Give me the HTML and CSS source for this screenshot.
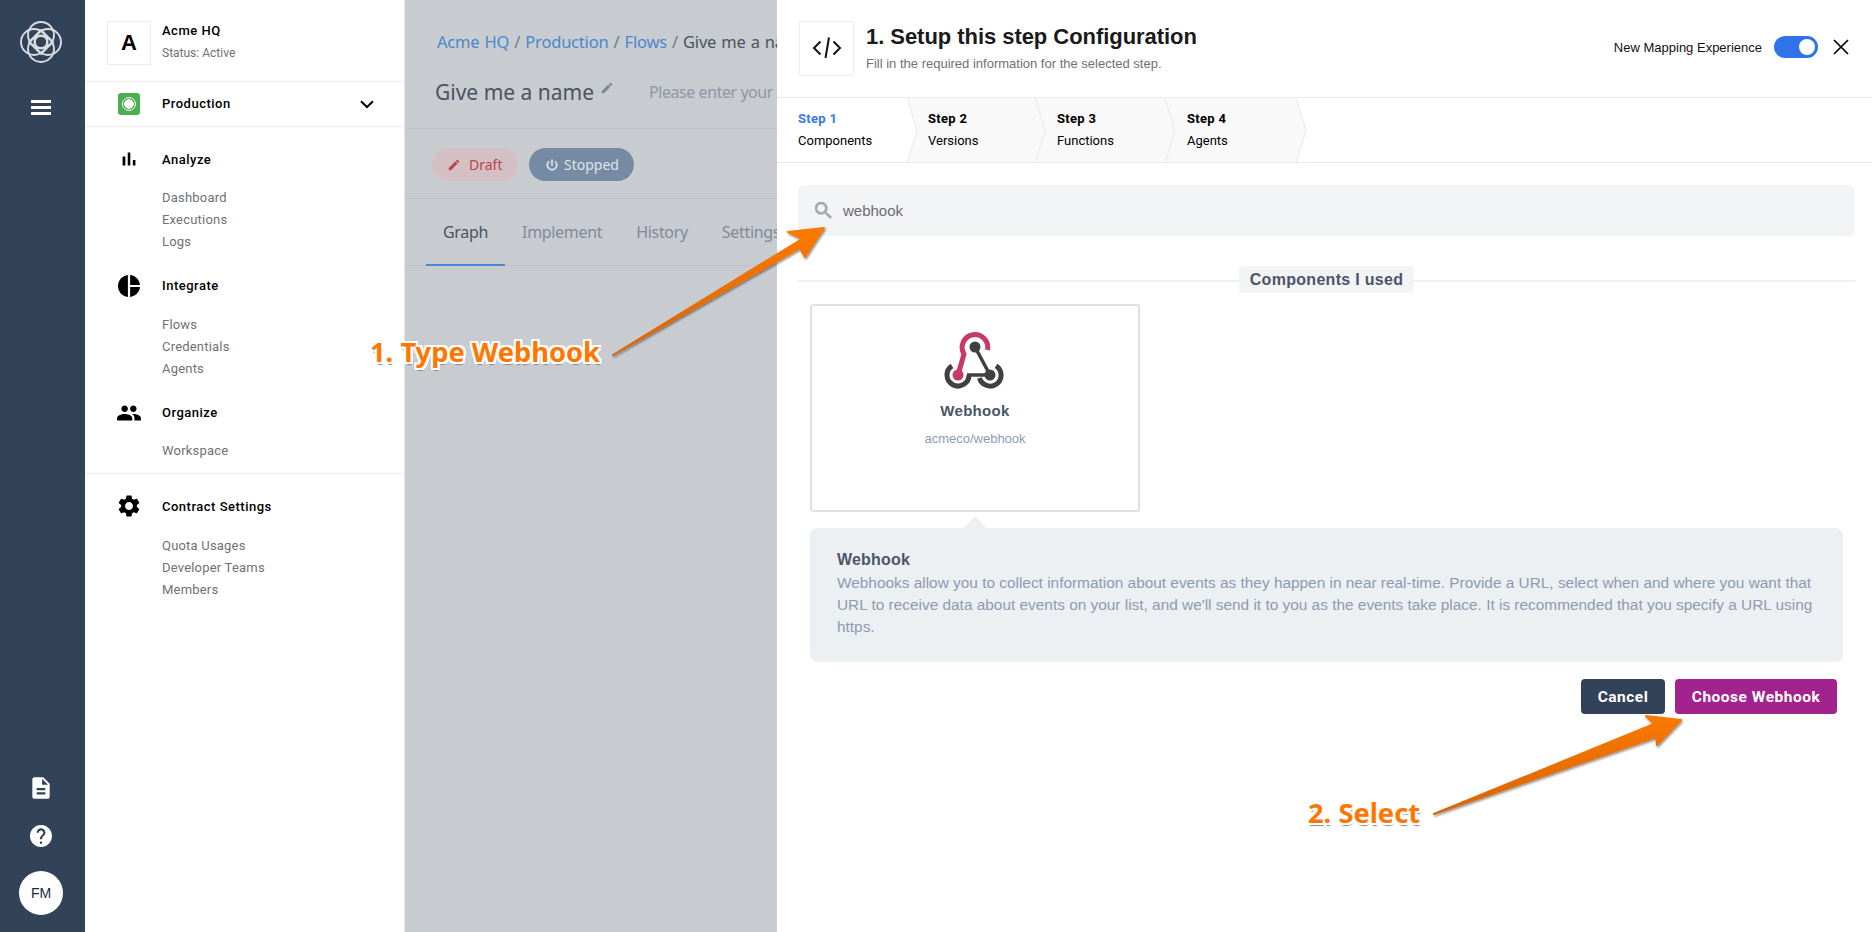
FILE: index.html
```html
<!DOCTYPE html>
<html lang="en">
<head>
<meta charset="utf-8">
<title>Setup this step Configuration</title>
<link rel="stylesheet" href="styles.css">
</head>
<body>
<div class="app">
  <aside class="rail">
    <svg class="rail-logo" viewBox="0 0 44 44" fill="none" stroke="#d9dde1" stroke-width="1.900">
      <circle cx="22" cy="15" r="13"/><circle cx="22" cy="29" r="13"/><circle cx="15" cy="22" r="13"/><circle cx="29" cy="22" r="13"/>
      <circle cx="22" cy="22" r="6.500" stroke-width="2.200"/>
      <path d="M22 10 34 22 22 34 10 22Z"/>
    </svg>
    <div class="burger"><span></span><span></span><span></span></div>
    <div class="rail-space"></div>
    <svg class="rail-icon" viewBox="0 0 24 24"><path d="M14 2H6c-1.100 0-1.990.9-1.990 2L4 20c0 1.100.89 2 1.990 2H18c1.100 0 2-.9 2-2V8l-6-6zm2 16H8v-2h8v2zm0-4H8v-2h8v2zm-3-5V3.500L18.500 9H13z"/></svg>
    <svg class="rail-icon help" viewBox="2 2 20 20"><path d="M12 2C6.480 2 2 6.480 2 12s4.480 10 10 10 10-4.480 10-10S17.520 2 12 2zm1 17h-2v-2h2v2zm2.070-7.750l-.9.920C13.450 12.900 13 13.500 13 15h-2v-.5c0-1.100.45-2.100 1.170-2.830l1.240-1.260c.37-.36.59-.86.59-1.410 0-1.100-.9-2-2-2s-2 .9-2 2H8c0-2.210 1.790-4 4-4s4 1.790 4 4c0 .88-.36 1.680-.93 2.250z"/></svg>
    <div class="avatar">FM</div>
  </aside>

  <nav class="sidebar">
    <header class="org">
      <div class="org-logo">A</div>
      <div>
        <div class="org-name">Acme HQ</div>
        <div class="org-status">Status: Active</div>
      </div>
    </header>
    <div class="env">
      <span class="env-icon"><span class="env-dot"></span></span>
      <span class="env-name">Production</span>
      <svg class="env-chev" viewBox="0 0 14 9" fill="none" stroke="#000" stroke-width="2"><path d="M1 1.200 7 7l6-5.800"/></svg>
    </div>
    <section class="group first">
      <div class="group-head">
        <svg class="group-icon" viewBox="0 0 24 24"><path d="M5 9.200h3V19H5V9.200zM10.600 5h2.800v14h-2.800V5zm5.600 8H19v6h-2.800v-6z"/></svg>
        <span>Analyze</span>
      </div>
      <a>Dashboard</a><a>Executions</a><a>Logs</a>
    </section>
    <section class="group roomy">
      <div class="group-head">
        <svg class="group-icon" viewBox="2 2 20 20"><path d="M11 2v20c-5.070-.5-9-4.790-9-10s3.930-9.500 9-10zm2.030 0v8.990H22c-.47-4.740-4.240-8.520-8.970-8.990zm0 11.010V22c4.740-.47 8.500-4.250 8.970-8.990h-8.970z"/></svg>
        <span>Integrate</span>
      </div>
      <a>Flows</a><a>Credentials</a><a>Agents</a>
    </section>
    <section class="group divided">
      <div class="group-head">
        <svg class="group-icon wide" viewBox="0 0 24 24"><path d="M16 11c1.660 0 2.990-1.340 2.990-3S17.660 5 16 5c-1.660 0-3 1.340-3 3s1.340 3 3 3zm-8 0c1.660 0 2.990-1.340 2.990-3S9.660 5 8 5C6.340 5 5 6.340 5 8s1.340 3 3 3zm0 2c-2.330 0-7 1.170-7 3.500V19h14v-2.500c0-2.330-4.670-3.500-7-3.500zm8 0c-.29 0-.62.02-.97.05 1.160.84 1.970 1.970 1.970 3.450V19h6v-2.500c0-2.330-4.670-3.500-7-3.500z"/></svg>
        <span>Organize</span>
      </div>
      <a>Workspace</a>
    </section>
    <section class="group settings">
      <div class="group-head">
        <svg class="group-icon" viewBox="2 2 20 20"><path d="M19.140 12.940c.04-.3.06-.61.06-.94 0-.32-.02-.64-.07-.94l2.030-1.580c.18-.14.23-.41.12-.61l-1.920-3.320c-.12-.22-.37-.29-.59-.22l-2.390.96c-.5-.38-1.030-.7-1.620-.94l-.36-2.540c-.04-.24-.24-.41-.48-.41h-3.840c-.24 0-.43.17-.47.41l-.36 2.540c-.59.24-1.130.57-1.620.94l-2.390-.96c-.22-.08-.47 0-.59.22L2.740 8.870c-.12.21-.08.47.12.61l2.030 1.580c-.05.3-.09.63-.09.94s.02.64.07.94l-2.030 1.580c-.18.14-.23.41-.12.61l1.920 3.320c.12.22.37.29.59.22l2.390-.96c.5.38 1.030.7 1.620.94l.36 2.540c.05.24.24.41.48.41h3.840c.24 0 .44-.17.47-.41l.36-2.540c.59-.24 1.130-.56 1.620-.94l2.390.96c.22.08.47 0 .59-.22l1.920-3.320c.12-.22.07-.47-.12-.61l-2.010-1.580zM12 15.600c-1.980 0-3.600-1.620-3.600-3.600s1.620-3.600 3.600-3.600 3.600 1.620 3.600 3.600-1.620 3.600-3.600 3.600z"/></svg>
        <span>Contract Settings</span>
      </div>
      <a>Quota Usages</a><a>Developer Teams</a><a>Members</a>
    </section>
  </nav>

  <main class="flow">
    <div class="flow-top">
      <div class="crumbs"><span class="link">Acme HQ</span> / <span class="link">Production</span> / <span class="link">Flows</span> / <span class="here">Give me a name</span></div>
      <div class="flow-name">
        <span class="name">Give me a name</span>
        <svg class="name-edit" viewBox="0 0 24 24"><path d="M3 17.250V21h3.750L17.810 9.940l-3.750-3.750L3 17.250zM20.710 7.040c.39-.39.39-1.020 0-1.410l-2.340-2.340c-.39-.39-1.020-.39-1.410 0l-1.830 1.830 3.750 3.750 1.830-1.830z"/></svg>
        <span class="desc">Please enter your flow description</span>
      </div>
    </div>
    <div class="pills">
      <span class="pill draft">
        <svg viewBox="0 0 24 24"><path d="M3 17.250V21h3.750L17.810 9.940l-3.750-3.750L3 17.250zM20.710 7.040c.39-.39.39-1.020 0-1.410l-2.340-2.340c-.39-.39-1.020-.39-1.410 0l-1.830 1.830 3.750 3.750 1.830-1.830z"/></svg>
        Draft
      </span>
      <span class="pill stopped">
        <svg viewBox="0 0 24 24"><path d="M13 3h-2v10h2V3zm4.830 2.170l-1.420 1.420C17.990 7.860 19 9.810 19 12c0 3.870-3.130 7-7 7s-7-3.130-7-7c0-2.190 1.010-4.140 2.580-5.420L6.170 5.170C4.230 6.820 3 9.260 3 12c0 4.970 4.030 9 9 9s9-4.030 9-9c0-2.740-1.230-5.180-3.170-6.830z"/></svg>
        Stopped
      </span>
    </div>
    <div class="tabs">
      <span class="tab active">Graph</span>
      <span class="tab">Implement</span>
      <span class="tab">History</span>
      <span class="tab">Settings</span>
    </div>
  </main>

  <section class="panel">
    <header class="panel-head">
      <div class="code-box">
        <svg viewBox="0 0 30 24" fill="none" stroke="#111" stroke-width="2"><path d="M8.500 5.500 2 12l6.500 6.500M21.500 5.500 28 12l-6.500 6.500M17 1.500 13.500 22"/></svg>
      </div>
      <div class="panel-titles">
        <h1>1. Setup this step Configuration</h1>
        <p>Fill in the required information for the selected step.</p>
      </div>
      <span class="map-label">New Mapping Experience</span>
      <span class="toggle"><span class="knob"></span></span>
      <svg class="close" viewBox="0 0 16 16" fill="none" stroke="#000" stroke-width="1.700"><path d="M1 1 15 15M15 1 1 15"/></svg>
    </header>

    <div class="steps">
      <div class="step current"><b>Step 1</b><span>Components</span><svg class="chev" viewBox="0 0 11 65"><path d="M0 0 10 32.500 0 65"/></svg></div>
      <div class="step s2"><b>Step 2</b><span>Versions</span><svg class="chev" viewBox="0 0 11 65"><path d="M0 0 10 32.500 0 65"/></svg></div>
      <div class="step s3"><b>Step 3</b><span>Functions</span><svg class="chev" viewBox="0 0 11 65"><path d="M0 0 10 32.500 0 65"/></svg></div>
      <div class="step s4"><b>Step 4</b><span>Agents</span><svg class="chev" viewBox="0 0 11 65"><path d="M0 0 10 32.500 0 65"/></svg></div>
    </div>

    <div class="search">
      <svg viewBox="3 3 18 18"><path d="M15.500 14h-.79l-.28-.27C15.410 12.590 16 11.110 16 9.500 16 5.910 13.090 3 9.500 3S3 5.910 3 9.500 5.910 16 9.500 16c1.610 0 3.090-.59 4.230-1.570l.27.28v.79l5 4.990L20.490 19l-4.990-5zm-6 0C7.010 14 5 11.990 5 9.500S7.010 5 9.500 5 14 7.010 14 9.500 11.990 14 9.500 14z"/></svg>
      <span>webhook</span>
    </div>

    <div class="used"><span>Components I used</span></div>

    <div class="card">
      <svg class="hook" viewBox="0 0 64 64" fill="none">
        <g stroke="#404040" stroke-width="5">
          <path d="M9 40.800A11 11 0 1 0 26 50"/>
          <path d="M53 40.800A11 11 0 1 1 36.500 53"/>
          <path d="M24 50H47" stroke-width="3.500"/>
          <path d="M32 22 47 50" stroke-width="3.500"/>
        </g>
        <path d="M44.500 25A12.800 12.800 0 1 0 21 29L15 50" stroke="#c73a63" stroke-width="5"/>
        <circle cx="32" cy="22" r="5.500" fill="#404040"/>
        <circle cx="47" cy="50" r="5.500" fill="#404040"/>
        <circle cx="15" cy="50" r="5.500" fill="#c73a63"/>
      </svg>
      <div class="card-name">Webhook</div>
      <div class="card-path">acmeco/webhook</div>
    </div>

    <div class="info">
      <h2>Webhook</h2>
      <p>Webhooks allow you to collect information about events as they happen in near real-time. Provide a URL, select when and where you want that URL to receive data about events on your list, and we'll send it to you as the events take place. It is recommended that you specify a URL using https.</p>
    </div>

    <div class="actions">
      <button class="btn cancel">Cancel</button>
      <button class="btn choose">Choose Webhook</button>
    </div>
  </section>
</div>

<svg class="arrows" viewBox="0 0 1872 932">
  <defs>
    <linearGradient id="o1" x1="0" y1="0" x2="0.150" y2="1">
      <stop offset="0" stop-color="#ff7d00"/><stop offset="1" stop-color="#d86400"/>
    </linearGradient>
    <filter id="sh" x="-5%" y="-5%" width="110%" height="110%"><feDropShadow dx="1" dy="1.500" stdDeviation="0.800" flood-color="#000" flood-opacity=".45"/></filter>
  </defs>
  <path filter="url(#sh)" fill="url(#o1)" stroke="url(#o1)" stroke-width="2" stroke-linejoin="round" d="M613 355 802 239 788 232 824 228 805 257 800 248Z"/>
  <path filter="url(#sh)" fill="url(#o1)" stroke="url(#o1)" stroke-width="2" stroke-linejoin="round" d="M1434 814 1654 724 1646 716 1681 720 1657 745 1656 737Z"/>
</svg>
<div class="note n1">1. Type Webhook</div>
<div class="note n2">2. Select</div>
</body>
</html>
```
FILE: styles.css
```css
* { box-sizing: border-box; }
html, body { margin: 0; height: 100%; overflow: hidden; background: #fff; }
body { font-family: "Liberation Sans", Arial, sans-serif; color: #000; }
h1, h2, p { margin: 0; }

.app { display: flex; width: 1872px; height: 932px; }

/* left rail */
.rail { width: 85px; flex: none; background: #324359; display: flex; flex-direction: column; align-items: center; padding: 20px 3px 17px 0; }
.rail-logo { width: 44px; height: 44px; }
.burger { margin-top: 36px; display: flex; flex-direction: column; gap: 3px; }
.burger span { display: block; width: 20px; height: 3px; background: #fff; }
.rail-space { flex: 1; }
.rail-icon { width: 26px; height: 26px; fill: #fff; }
.rail-icon.help { width: 22px; height: 22px; margin-top: 24px; }
.avatar { width: 44px; height: 44px; margin-top: 24px; border-radius: 50%; background: #fff; color: #1c2a3c; font-size: 14px; font-weight: 500; display: flex; align-items: center; justify-content: center; }

/* sidebar */
.sidebar { width: 320px; flex: none; background: #fff; border-right: 1px solid #e8e8ea; font-family: Roboto, "Liberation Sans", sans-serif; }
.org { height: 82px; display: flex; align-items: flex-start; gap: 11px; padding: 21px 22px 0; border-bottom: 1px solid #eeeeef; }
.org-logo { width: 44px; height: 44px; border: 1px solid #ececed; display: flex; align-items: center; justify-content: center; font: 700 22px "Liberation Sans", sans-serif; }
.org-name { font-size: 13px; font-weight: 500; line-height: 18px; margin-top: 1px; letter-spacing: .5px; }
.org-status { font-size: 12px; line-height: 18px; margin-top: 4px; color: #6f7175; }
.env { height: 45px; display: flex; align-items: center; padding: 0 30px 0 33px; border-bottom: 1px solid #eeeeef; }
.env-icon { width: 22px; height: 22px; border-radius: 3px; background: #4cae50; display: flex; align-items: center; justify-content: center; }
.env-dot { width: 14px; height: 14px; border-radius: 50%; border: 1px solid #fff; background: radial-gradient(circle, #fff 0 4.500px, #4cae50 5px); }
.env-name { flex: 1; margin: -2px 0 0 22px; font-size: 13px; font-weight: 500; letter-spacing: .5px; }
.env-chev { width: 14px; height: 9px; }
.group { padding-top: 23px; }
.group.first { padding-top: 22px; }
.group.divided { padding-top: 23px; padding-bottom: 11px; border-bottom: 1px solid #eeeeef; }
.group.settings { padding-top: 22px; }
.group-head { height: 20px; display: flex; align-items: center; padding-left: 33px; font-size: 13px; font-weight: 500; letter-spacing: .5px; margin-bottom: 17.500px; }
.group.roomy .group-head { margin-bottom: 18px; }
.group.settings .group-head { margin-bottom: 19px; }
.group-head span { margin-left: 22px; }
.group-icon { width: 22px; height: 22px; flex: none; fill: #000; }
.group-icon.wide { width: 26px; height: 26px; margin: 0 -2px; }
.group a { display: block; margin-left: 77px; font-size: 13px; line-height: 22px; color: #6f7175; letter-spacing: .2px; }

/* dimmed flow page */
.flow { width: 372px; flex: none; overflow: hidden; background: #c8cbd0; white-space: nowrap; font-family: "Noto Sans", sans-serif; }
.flow-top { height: 129px; border-bottom: 1px solid #bfc3c9; padding: 29px 0 0 32px; }
.crumbs { font-size: 16.500px; letter-spacing: -.2px; word-spacing: 1px; line-height: 26px; color: #6f7885; }
.crumbs .link { color: #4a87cc; }
.crumbs .here { color: #4b5361; }
.flow-name { margin-top: 21px; display: flex; align-items: center; margin-left: -2px; }
.name { font-size: 21px; line-height: 32px; color: #4b5361; }
.name-edit { width: 14px; height: 14px; fill: #7c8797; margin: -8px 0 0 6px; flex: none; }
.desc { margin-left: 35px; font-size: 16px; letter-spacing: -.45px; color: #8d97a6; }
.pills { height: 70px; border-bottom: 1px solid #bfc3c9; display: flex; align-items: center; gap: 11px; padding: 2px 0 0 27px; }
.pill { height: 33px; border-radius: 17px; display: flex; align-items: center; font-size: 14px; }
.pill svg { width: 14px; height: 14px; }
.draft { width: 86px; background: #d3bfc4; color: #c0434f; padding-left: 15px; gap: 8px; }
.draft svg { fill: #c0434f; }
.stopped { width: 105px; background: #768aa3; color: #dde3ea; padding-left: 16px; gap: 5px; }
.stopped svg { fill: #dde3ea; stroke: #dde3ea; stroke-width: 1; }
.tabs { height: 67px; border-bottom: 1px solid #bfc3c9; display: flex; padding-left: 21px; font-size: 16px; letter-spacing: -.32px; }
.tab { height: 67px; padding: 0 17px; line-height: 66px; color: #7f8a9a; }
.tab.active { color: #4b5361; border-bottom: 2px solid #4a87cc; }

/* panel */
.panel { flex: 1; min-width: 0; background: #fff; display: flex; flex-direction: column; }
.panel-head { height: 98px; flex: none; display: flex; align-items: center; padding: 0 23px 0 22px; border-bottom: 1px solid #e9ebef; }
.code-box { width: 55px; height: 55px; margin-top: -1px; border: 1px solid #ececed; border-radius: 2px; display: flex; align-items: center; justify-content: center; }
.code-box svg { width: 30px; height: 24px; }
.panel-titles { flex: 1; margin-left: 12px; margin-top: -1px; }
h1 { font-size: 22px; line-height: 26px; font-weight: 700; color: #1a1a1a; letter-spacing: -.05px; }
.panel-titles p { font-size: 13px; line-height: 16px; margin-top: 6px; color: #6f7175; }
.map-label { font-size: 13px; margin-top: -3px; color: #111; font-family: "Liberation Sans", sans-serif; }
.toggle { width: 44px; height: 22px; margin: -3px 0 0 12px; border-radius: 11px; background: #2f73ea; display: flex; justify-content: flex-end; align-items: center; padding-right: 3px; }
.knob { width: 16px; height: 16px; border-radius: 50%; background: #fff; }
.close { width: 16px; height: 16px; margin: -3px 0 0 15px; }

.steps { height: 65px; flex: none; display: flex; border-bottom: 1px solid #e3e8f2; font-family: Roboto, "Liberation Sans", sans-serif; font-size: 13px; }
.step { position: relative; height: 64px; width: 128px; background: #f9f9fa; padding: 12px 0 0 22px; display: flex; flex-direction: column; gap: 4px; line-height: 18px; }
.step b { font-weight: 700; letter-spacing: .3px; }
.step.current { width: 130px; background: #fff; padding-left: 21px; }
.step.current b { color: #3a78f2; }
.step.s2 { padding-left: 21px; }
.step.s3 { width: 130px; }
.step.s4 { width: 131px; }
.chev { position: absolute; z-index: 1; top: 0; right: -11px; width: 11px; height: 65px; }
.chev path { fill: #f9f9fa; stroke: #e3e8f2; stroke-width: 1; }
.current .chev path { fill: #fff; }

.search { height: 51px; flex: none; margin: 22px 17px 0 21px; border-radius: 6px; background: #f3f4f6; display: flex; align-items: center; padding-left: 17px; font-size: 15px; color: #6b6d72; }
.search svg { width: 17px; height: 17px; fill: #a0a6b0; stroke: #a0a6b0; stroke-width: .8; margin-right: 11px; }

.used { height: 27px; flex: none; margin: 30px 17px 0 21px; display: flex; justify-content: center; background: linear-gradient(#f1f2f4, #f1f2f4) 0 14px / 100% 2px no-repeat; }
.used span { padding: 0 11px; height: 27px; line-height: 27px; border-radius: 4px; background: #f3f4f6; font-size: 16px; font-weight: 700; color: #4c5568; letter-spacing: .3px; }

.card { width: 330px; height: 208px; flex: none; margin: 11px 0 0 33px; border: 2px solid #dde2e2; border-radius: 3px; display: flex; flex-direction: column; align-items: center; padding-top: 19px; }
.hook { width: 64px; height: 64px; }
.card-name { margin-top: 13px; font-size: 15px; line-height: 18px; font-weight: 700; color: #4c5568; letter-spacing: .3px; }
.card-path { margin-top: 10px; font-size: 13px; line-height: 18px; color: #8c9bb5; }

.info { position: relative; height: 134px; flex: none; margin: 16px 29px 0 33px; padding: 22px 24px 0 27px; border-radius: 8px; background: #edf0f3; }
.info::before { content: ""; position: absolute; left: 157px; top: -8px; width: 16px; height: 16px; background: #edf0f3; transform: rotate(45deg); border-radius: 2px; }
.info h2 { position: relative; font-size: 16px; line-height: 20px; font-weight: 700; color: #4c5568; letter-spacing: .2px; }
.info p { position: relative; font-size: 15.400px; line-height: 22px; color: #8c9bb0; margin-top: 2px; }

.actions { flex: none; display: flex; justify-content: flex-end; gap: 10px; margin: 17px 35px 0 0; }
.btn { height: 35px; border: 0; border-radius: 4px; color: #fff; font: 700 15.500px Roboto, "Liberation Sans", sans-serif; letter-spacing: .5px; padding: 0; }
.cancel { width: 84px; background: #324359; }
.choose { width: 162px; background: #a3238e; }

/* tutorial annotations */
.arrows { position: absolute; left: 0; top: 0; width: 1872px; height: 932px; pointer-events: none; }
.note { position: absolute; font: 700 27.300px "Noto Sans", sans-serif; line-height: 36px; color: #ff7600; white-space: nowrap;
  text-shadow: 1px 0 0 #fff, -1px 0 0 #fff, 0 1px 0 #fff, 0 -1px 0 #fff, 2px 0 0 #fff, -2px 0 0 #fff, 0 2px 0 #fff, 0 -2px 0 #fff, 2px 2px 0 #fff, -2px 2px 0 #fff, 2px -2px 0 #fff, -2px -2px 0 #fff, 1px 3px 1px #888; }
.n1 { left: 370px; top: 334px; }
.n2 { left: 1308px; top: 795px; }
```
